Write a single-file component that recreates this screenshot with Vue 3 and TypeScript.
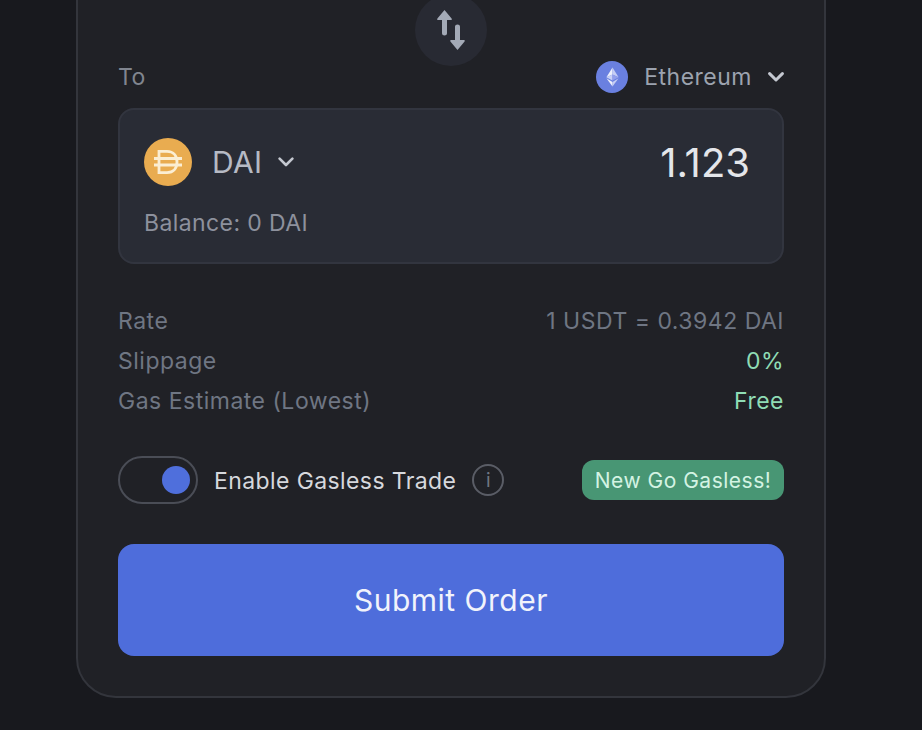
<script setup lang="ts">
const details = [
  { label: 'Rate', value: '1 USDT = 0.3942 DAI', accent: false },
  { label: 'Slippage', value: '0%', accent: true },
  { label: 'Gas Estimate (Lowest)', value: 'Free', accent: true }
]
</script>

<template>
  <div class="page">
    <div class="card">
      <div class="swap-row">
        <button class="swap-btn">
          <svg width="28" height="40" viewBox="0 0 28 40" fill="#a3a9b6">
            <path d="M7.5 0 L14.6 8.6 Q15.2 10 14 10 L10 10 L10 23.5 Q10 25.5 7.5 25.5 Q5 25.5 5 23.5 L5 10 L1 10 Q-.2 10 .4 8.6 Z" />
            <path d="M20.5 40 L13.4 31.4 Q12.8 30 14 30 L18 30 L18 16.5 Q18 14.5 20.5 14.5 Q23 14.5 23 16.5 L23 30 L27 30 Q28.2 30 27.6 31.4 Z" />
          </svg>
        </button>
      </div>

      <div class="to-row">
        <span class="to-label">To</span>
        <div class="network">
          <span class="eth-icon">
            <svg width="13" height="20" viewBox="0 0 18 26">
              <path d="M9 0 L9 9.6 L0.6 13.2 Z" fill="#eef0fb" />
              <path d="M9 0 L17.4 13.2 L9 9.6 Z" fill="#c6cef4" />
              <path d="M0.6 13.2 L9 9.6 L9 18 Z" fill="#c9d1f6" />
              <path d="M17.4 13.2 L9 9.6 L9 18 Z" fill="#939fec" />
              <path d="M0.6 14.9 L9 19.8 L9 26 Z" fill="#eef0fb" />
              <path d="M17.4 14.9 L9 19.8 L9 26 Z" fill="#c6cef4" />
            </svg>
          </span>
          <span class="network-name">Ethereum</span>
          <svg class="chev" width="16" height="10" viewBox="0 0 16 10" fill="none">
            <path d="M1.6 1.6 L8 8 L14.4 1.6" stroke="#c4c8d0" stroke-width="3" stroke-linecap="round" stroke-linejoin="round" />
          </svg>
        </div>
      </div>

      <div class="token-box">
        <div class="token-top">
          <div class="token-select">
            <span class="dai-icon">
              <svg width="30" height="26" viewBox="0 0 30 26" fill="none" stroke="#fbeed3" stroke-width="2.8">
                <path d="M6 2.4 H14 C20.5 2.4 24 7 24 13 C24 19 20.5 23.6 14 23.6 H6 Z" />
                <path d="M1 9.5 H29 M1 16 H29" />
              </svg>
            </span>
            <span class="token-name">DAI</span>
            <svg class="token-chev" width="16" height="10" viewBox="0 0 16 10" fill="none">
              <path d="M1.6 1.6 L8 8 L14.4 1.6" stroke="#c4c8d0" stroke-width="2.6" stroke-linecap="round" stroke-linejoin="round" />
            </svg>
          </div>
          <span class="amount">1.123</span>
        </div>
        <div class="balance">Balance: 0 DAI</div>
      </div>

      <div class="details">
        <div v-for="row in details" :key="row.label" class="detail-row">
          <span class="detail-label">{{ row.label }}</span>
          <span class="detail-value" :class="{ accent: row.accent }">{{ row.value }}</span>
        </div>
      </div>

      <div class="gasless-row">
        <div class="gasless-left">
          <span class="toggle"><span class="knob"></span></span>
          <span class="gasless-label">Enable Gasless Trade</span>
          <span class="info">i</span>
        </div>
        <span class="badge">New Go Gasless!</span>
      </div>

      <button class="submit">Submit Order</button>
    </div>
  </div>
</template>

<style>
html, body {
  margin: 0;
  background: #18191e;
}
</style>

<style scoped>
.page {
  height: 730px;
  overflow: hidden;
  background: #18191e;
  font-family: Inter, "Liberation Sans", sans-serif;
}

.card {
  box-sizing: border-box;
  width: 750px;
  height: 779px;
  margin: -81px 0 0 76px;
  padding: 77px 40px 40px;
  background: #202126;
  border: 2px solid #33353c;
  border-radius: 40px;
}

.swap-row {
  display: flex;
  justify-content: center;
  height: 36px;
}

.swap-btn {
  display: flex;
  align-items: center;
  justify-content: center;
  flex: none;
  width: 72px;
  height: 72px;
  margin-top: -4px;
  padding: 0;
  border: none;
  border-radius: 50%;
  background: #282a33;
}

.to-row {
  display: flex;
  align-items: center;
  justify-content: space-between;
  height: 32px;
  margin-top: 27px;
}

.to-label {
  font-size: 23px;
  letter-spacing: 0.5px;
  color: #80858f;
}

.network {
  display: flex;
  align-items: center;
}

.eth-icon {
  display: flex;
  align-items: center;
  justify-content: center;
  width: 32px;
  height: 32px;
  border-radius: 50%;
  background: #6a80e0;
}

.network-name {
  margin-left: 16px;
  font-size: 23px;
  letter-spacing: 0.5px;
  color: #9ca3af;
}

.chev {
  margin-left: 16px;
}

.token-box {
  box-sizing: border-box;
  height: 156px;
  margin-top: 15px;
  padding: 28px 32px 0 24px;
  background: #292c35;
  border: 2px solid #32353f;
  border-radius: 16px;
}

.token-top {
  display: flex;
  align-items: center;
  justify-content: space-between;
  height: 48px;
}

.token-select {
  display: flex;
  align-items: center;
}

.dai-icon {
  display: flex;
  align-items: center;
  justify-content: center;
  width: 48px;
  height: 48px;
  border-radius: 50%;
  background: #e9ac50;
}

.token-name {
  margin-left: 20px;
  font-size: 30px;
  letter-spacing: 0.3px;
  color: #b6bac4;
}

.token-chev {
  margin-left: 16px;
}

.amount {
  font-size: 40px;
  color: #e4e6ea;
}

.balance {
  margin-top: 23px;
  font-size: 23px;
  letter-spacing: 0.4px;
  color: #8d919d;
}

.details {
  display: flex;
  flex-direction: column;
  margin-top: 37px;
}

.detail-row {
  display: flex;
  justify-content: space-between;
  align-items: center;
  height: 40px;
  font-size: 23px;
  letter-spacing: 0.5px;
}

.detail-label {
  color: #6f7683;
}

.detail-value {
  color: #6f7683;
}

.detail-value.accent {
  color: #8fdcb5;
}

.gasless-row {
  display: flex;
  align-items: center;
  justify-content: space-between;
  margin-top: 35px;
}

.gasless-left {
  display: flex;
  align-items: center;
}

.toggle {
  box-sizing: border-box;
  display: flex;
  align-items: center;
  justify-content: flex-end;
  width: 80px;
  height: 48px;
  padding-right: 6px;
  border: 2px solid #4a4d56;
  border-radius: 24px;
}

.knob {
  width: 28px;
  height: 28px;
  border-radius: 50%;
  background: #4f6fdc;
}

.gasless-label {
  margin-left: 16px;
  padding-top: 2px;
  font-size: 23px;
  letter-spacing: 0.4px;
  color: #d6d8dd;
}

.info {
  box-sizing: border-box;
  display: flex;
  align-items: center;
  justify-content: center;
  width: 32px;
  height: 32px;
  margin-left: 16px;
  border: 2px solid #5a5d66;
  border-radius: 50%;
  font-size: 19px;
  color: #6f7683;
}

.badge {
  box-sizing: border-box;
  display: flex;
  align-items: center;
  justify-content: center;
  width: 202px;
  height: 40px;
  border-radius: 12px;
  background: #489674;
  font-size: 21px;
  letter-spacing: 0.5px;
  color: #d4f3e3;
}

.submit {
  display: block;
  width: 666px;
  height: 112px;
  margin-top: 40px;
  padding: 0;
  border: none;
  border-radius: 16px;
  background: #4e6ddb;
  font-family: inherit;
  font-size: 30px;
  letter-spacing: 0.5px;
  color: #f1f3fb;
}
</style>
